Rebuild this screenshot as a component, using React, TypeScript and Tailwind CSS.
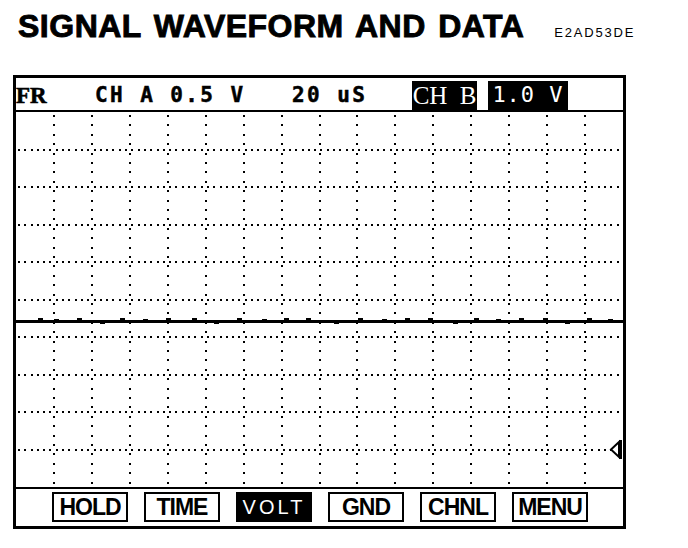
const COLS = 16;
const ROWS = 10;
const GRID_W = 607;
const GRID_H = 375;

const bumps = [
  [22, -2], [38, -1], [61, -2], [84, 1], [104, -2], [127, -1], [150, -2], [176, -2],
  [198, 1], [221, -2], [246, -1], [268, -2], [290, -2], [318, 1], [342, -2], [366, -1],
  [389, -2], [412, -2], [437, 1], [458, -2], [480, -1], [503, -2], [527, -2], [549, 1],
  [571, -2], [592, -1],
];

function ScopeGrid() {
  const colX = Array.from({ length: COLS - 1 }, (_, i) => Math.round((GRID_W / COLS) * (i + 1)));
  const rowY = Array.from({ length: ROWS - 1 }, (_, i) => Math.round((GRID_H / ROWS) * (i + 1)));

  return (
    <svg width={GRID_W} height={GRID_H} viewBox={`0 0 ${GRID_W} ${GRID_H}`} shapeRendering="crispEdges" className="block">
      {/* horizontal dotted divisions */}
      {rowY.map(y => (
        <line key={`h${y}`} x1={0} y1={y} x2={GRID_W} y2={y} stroke="#000" strokeWidth={2} strokeDasharray="2 4.3" strokeDashoffset={-2} />
      ))}
      {/* vertical dotted divisions */}
      {colX.map(x => (
        <line key={`v${x}`} x1={x} y1={0} x2={x} y2={GRID_H} stroke="#000" strokeWidth={2} strokeDasharray="2 7.4" strokeDashoffset={-3} />
      ))}

      {/* trace */}
      <rect x={0} y={208} width={GRID_W} height={3} fill="#000" />
      {bumps.map(([x, d]) => (
        <rect key={x} x={x} y={d < 0 ? 208 + d : 211} width={5} height={Math.abs(d)} fill="#000" />
      ))}

      {/* ground marker */}
      <path d="M603 330 L595 337.5 L603 345 Z" fill="#fff" stroke="#000" strokeWidth={2} shapeRendering="auto" />
      <rect x={603} y={328} width={3} height={19} fill="#000" />
    </svg>
  );
}

const softKeys = ['HOLD', 'TIME', 'VOLT', 'GND', 'CHNL', 'MENU'];

export default function App() {
  return (
    <div className="w-[688px] h-[548px] bg-white text-black overflow-hidden">
      {/* Title */}
      <div className="flex items-baseline pl-[18px] pt-[10px] font-['Liberation_Sans',Arial,sans-serif]">
        <h1 className="text-[32px] leading-[32px] font-bold tracking-[0.5px] [word-spacing:3px] [-webkit-text-stroke:0.9px_#000]">
          SIGNAL WAVEFORM AND DATA
        </h1>
        <span className="ml-[30px] text-[13px] tracking-[1.8px]">E2AD53DE</span>
      </div>

      {/* Scope screen */}
      <div className="ml-[13px] mt-[32px] w-[613px] border-[3px] border-black">
        {/* Status line */}
        <div className="h-[34px] flex items-end border-b-2 border-black font-['DejaVu_Sans_Mono',monospace] text-[21px] leading-none">
          <span className="w-[79px] h-[29px] flex items-center font-['Liberation_Serif',serif] font-bold text-[23px] [-webkit-text-stroke:0.6px_#000]">FR</span>
          <span className="w-[197px] h-[29px] flex items-center font-bold tracking-[2.4px] [-webkit-text-stroke:0.5px_#000]">CH A 0.5 V</span>
          <span className="w-[120px] h-[29px] flex items-center font-bold tracking-[2.4px] [-webkit-text-stroke:0.5px_#000]">20 uS</span>
          <span className="w-[65px] h-[29px] flex items-center justify-center bg-black text-white font-['Liberation_Serif',serif] text-[25px] [word-spacing:6px]">
            CH B
          </span>
          <span className="ml-[11px] w-[80px] h-[29px] flex items-center justify-center bg-black text-white text-[22px] tracking-[1px]">
            1.0 V
          </span>
        </div>

        {/* Graticule */}
        <ScopeGrid />

        {/* Soft keys */}
        <div className="h-[39px] border-t-2 border-black flex items-center gap-[16px] pl-[36px] font-['Liberation_Sans',Arial,sans-serif] leading-none">
          {softKeys.map(key =>
            key === 'VOLT' ? (
              <span key={key} className="w-[76px] h-[30px] flex items-center justify-center bg-black text-white text-[20px] tracking-[3px]">
                {key}
              </span>
            ) : (
              <span key={key} className="w-[76px] h-[30px] flex items-center justify-center border-[2.5px] border-black text-[23px] font-bold tracking-[-1px]">
                {key}
              </span>
            )
          )}
        </div>
      </div>
    </div>
  );
}
